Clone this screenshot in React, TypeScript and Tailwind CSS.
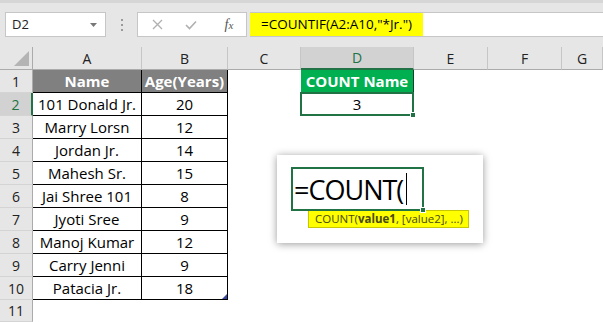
import React from "react";

const COLS = ["A", "B", "C", "D", "E", "F", "G"];
const DATA: [string, string][] = [
  ["101 Donald Jr.", "20"],
  ["Marry Lorsn", "12"],
  ["Jordan Jr.", "14"],
  ["Mahesh Sr.", "15"],
  ["Jai Shree 101", "8"],
  ["Jyoti Sree", "9"],
  ["Manoj Kumar", "12"],
  ["Carry Jenni", "9"],
  ["Patacia Jr.", "18"],
];

const font = { fontFamily: '"Open Sans", "Liberation Sans", sans-serif' };

function RowHeader({ n, active }: { n: number; active?: boolean }) {
  return (
    <div
      className={
        active
          ? "flex items-center justify-center bg-[#d2d2d2] text-[#217346] border-b border-[#d4d4d4] border-r-2 border-r-[#217346] text-[14px]"
          : "flex items-center justify-center bg-[#e6e6e6] text-[#222] border-b border-[#d4d4d4] border-r border-r-[#ababab] text-[14px]"
      }
    >
      {n}
    </div>
  );
}

export default function App() {
  return (
    <div className="relative w-[603px] h-[322px] overflow-hidden bg-white text-black" style={font}>
      {/* Toolbar / formula bar */}
      <div className="h-[47px] bg-[#e6e6e6] border-t-[3px] border-[#d6d6d6] flex items-start pt-[9px]">
        <div className="ml-[5px] w-[101px] h-[25px] bg-white border border-[#c6c6c6] flex items-center justify-between pl-[6px] pr-[8px]">
          <span className="text-[13px] text-[#222]">D2</span>
          <svg width="7" height="4" viewBox="0 0 7 4">
            <path d="M0 0 L7 0 L3.5 4 Z" fill="#777" />
          </svg>
        </div>
        <div className="w-[31px] h-[25px] flex flex-col items-center justify-center gap-[3px]">
          <div className="w-[2px] h-[2px] bg-[#9a9a9a]" />
          <div className="w-[2px] h-[2px] bg-[#9a9a9a]" />
          <div className="w-[2px] h-[2px] bg-[#9a9a9a]" />
        </div>
        <div className="w-[110px] h-[25px] bg-white border border-[#c6c6c6] flex items-center">
          <div className="w-[38px] flex justify-center">
            <svg width="11" height="11" viewBox="0 0 11 11">
              <path d="M1 1 L10 10 M10 1 L1 10" stroke="#b0b0b0" strokeWidth="1.3" fill="none" />
            </svg>
          </div>
          <div className="w-[30px] flex justify-center">
            <svg width="12" height="10" viewBox="0 0 12 10">
              <path d="M1 5 L4.5 8.5 L11 1.5" stroke="#b0b0b0" strokeWidth="1.6" fill="none" />
            </svg>
          </div>
          <div className="flex-1 flex justify-center pl-[6px]">
            <span className="italic text-[14px] text-[#555]" style={{ fontFamily: '"Liberation Serif", serif' }}>
              f<span className="text-[11px]">x</span>
            </span>
          </div>
        </div>
        <div className="ml-[3px] flex-1 h-[25px] bg-white border-y border-[#c6c6c6] flex">
          <div className="w-[173px] h-full bg-[#ffff00] flex items-center pl-[11px] text-[13.5px] whitespace-nowrap">
            =COUNTIF(A2:A10,"*Jr.")
          </div>
        </div>
      </div>

      {/* Grid */}
      <div className="grid grid-cols-[33px_109px_86px_73px_113px_74px_74px_41px] grid-rows-[23px_repeat(10,23px)_22px] text-[15px]">
        {/* header row */}
        <div className="relative bg-[#e6e6e6] border-r border-[#ababab] border-b border-b-[#ababab]">
          <svg className="absolute right-[3px] bottom-[3px]" width="15" height="15" viewBox="0 0 15 15">
            <path d="M15 0 L15 15 L0 15 Z" fill="#b4b4b4" />
          </svg>
        </div>
        {COLS.map((c) => (
          <div
            key={c}
            className={
              c === "D"
                ? "flex items-center justify-center bg-[#d2d2d2] text-[#217346] border-r border-[#c6c6c6] border-b-2 border-b-[#217346] text-[14px]"
                : "flex items-center justify-center bg-[#e6e6e6] text-[#222] border-r border-[#c6c6c6] border-b border-b-[#ababab] text-[14px]"
            }
          >
            {c}
          </div>
        ))}

        {/* row 1 */}
        <RowHeader n={1} />
        <div className="flex items-center justify-center bg-[#808080] text-white font-bold border-r border-b border-black">Name</div>
        <div className="flex items-center justify-center bg-[#808080] text-white font-bold border-r border-b border-black">Age(Years)</div>
        <div />
        <div className="flex items-center justify-center bg-[#00b050] text-white font-bold border-r border-b border-[#1f3d2a]">COUNT Name</div>
        <div />
        <div />
        <div />

        {/* row 2 */}
        <RowHeader n={2} active />
        <div className="flex items-center justify-center border-r border-b border-black">{DATA[0][0]}</div>
        <div className="flex items-center justify-center border-r border-b border-black">{DATA[0][1]}</div>
        <div />
        <div className="relative flex items-center justify-center border-2 border-[#217346] -ml-[1px] -mt-[1px]">
          3
          <div className="absolute -right-[4px] -bottom-[4px] w-[6px] h-[6px] bg-[#217346] border border-white" />
        </div>
        <div />
        <div />
        <div />

        {DATA.slice(1).map(([name, age], i) => {
          const r = i + 3;
          return (
            <React.Fragment key={r}>
              <RowHeader n={r} />
              <div className="flex items-center justify-center border-r border-b border-black">{name}</div>
              <div className="relative flex items-center justify-center border-r border-b border-black">
                {age}
                {r === 10 && (
                  <svg className="absolute right-0 bottom-0" width="5" height="5" viewBox="0 0 5 5">
                    <path d="M5 0 L5 5 L0 5 Z" fill="#3a4a9a" />
                  </svg>
                )}
              </div>
              <div />
              <div />
              <div />
              <div />
              <div />
            </React.Fragment>
          );
        })}

        {/* row 11 */}
        <RowHeader n={11} />
        <div />
        <div />
        <div />
        <div />
        <div />
        <div />
        <div />
      </div>

      {/* Floating zoom popup */}
      <div className="absolute left-[277px] top-[155px] w-[206px] h-[88px] bg-white shadow-[0_1px_8px_rgba(0,0,0,0.4)] pl-[14px] pt-[12px]">
        <div className="relative w-[133px] h-[44px] border-2 border-[#217346] flex items-center pl-[1px]">
          <span className="text-[27px] leading-none tracking-[-1px] text-black">=COUNT(</span>
          <span className="w-[1px] h-[32px] bg-black ml-[3px]" />
          <div className="absolute -right-[4px] -bottom-[4px] w-[6px] h-[6px] bg-[#217346] border border-white" />
        </div>
        <div className="ml-[17px] -mt-[1px] w-[161px] h-[18px] bg-[#ffff00] border border-[#c8c800] flex items-center pl-[6px] text-[11.5px] text-[#4a4a10] whitespace-nowrap">
          COUNT(<span className="font-bold">value1</span>, [value2], ...)
        </div>
      </div>
    </div>
  );
}
